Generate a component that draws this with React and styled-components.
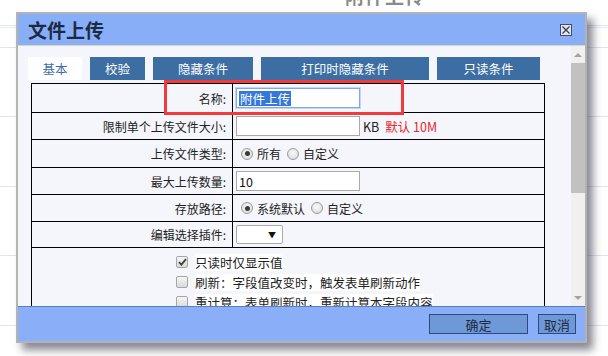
import React from 'react'
import styled, { createGlobalStyle } from 'styled-components'

const GlobalStyle = createGlobalStyle`
  body {
    margin: 0;
    font-family: "Noto Sans CJK SC", "Liberation Sans", sans-serif;
  }
`

const rows = [
  { label: '名称:', h: 28, kind: 'name' },
  { label: '限制单个上传文件大小:', h: 26, kind: 'size' },
  { label: '上传文件类型:', h: 27, kind: 'type' },
  { label: '最大上传数量:', h: 26, kind: 'count' },
  { label: '存放路径:', h: 26, kind: 'path' },
  { label: '编辑选择插件:', h: 25, kind: 'plugin' },
]

const checks = [
  { text: '只读时仅显示值', on: true },
  { text: '刷新：字段值改变时，触发表单刷新动作', on: false },
  { text: '重计算：表单刷新时，重新计算本字段内容', on: false },
]

const tabs = [
  { name: '基本', w: 54, active: true },
  { name: '校验', w: 55 },
  { name: '隐藏条件', w: 100 },
  { name: '打印时隐藏条件', w: 168 },
  { name: '只读条件', w: 103 },
]

const Page = styled.div`
  position: relative;
  width: 608px;
  height: 356px;
  overflow: hidden;
  background-color: #fff;
  background-image: linear-gradient(to bottom, transparent 25px, #dfe4ee 25px, #dfe4ee 26px, transparent 26px, transparent 27px, #e6eaf2 27px, #e6eaf2 28px, transparent 28px),
    repeating-linear-gradient(to bottom, transparent 0, transparent 47px, #dfe4ee 47px, #dfe4ee 48px, transparent 48px, transparent 69.5px);
`

const BackTitle = styled.div`
  padding-left: 345px;
  margin-top: -18px;
  font-size: 19px;
  font-weight: bold;
  color: #8a8a8a;
  letter-spacing: 1px;
`

const Dialog = styled.div`
  position: absolute;
  left: 16px;
  top: 12px;
  width: 571px;
  height: 331px;
  box-sizing: border-box;
  border: 2px solid #b3b3b3;
  background: #f5f6fb;
  display: flex;
  flex-direction: column;
  box-shadow: 6px 7px 8px rgba(40, 40, 60, 0.55);
`

const TitleBar = styled.div`
  height: 31px;
  flex: none;
  background: #88aef8;
  border-bottom: 1px solid #ddd7b4;
  display: flex;
  align-items: center;
  justify-content: space-between;
  padding: 0 13px 0 10px;
`

const Title = styled.div`
  font-size: 19px;
  font-weight: bold;
  color: #1c2a44;
  line-height: 1;
`

const CloseBox = styled.div`
  width: 12px;
  height: 12px;
  box-sizing: border-box;
  border: 1px solid #4a4a5a;
  background: #dfe4f2;
  display: flex;
  align-items: center;
  justify-content: center;
`

const Body = styled.div`
  flex: 1;
  display: flex;
  min-height: 0;
`

const Content = styled.div`
  flex: 1;
  overflow: hidden;
  padding-top: 11px;
`

const TabBar = styled.div`
  display: flex;
  gap: 8px;
  padding-left: 10px;
`

const Tab = styled.div`
  width: ${p => p.$w}px;
  height: 23px;
  display: flex;
  align-items: center;
  justify-content: center;
  font-size: 12.5px;
  background: ${p => (p.$active ? '#fff' : '#3c6ea3')};
  color: ${p => (p.$active ? '#3c6ea3' : '#fff')};
`

const Table = styled.div`
  margin: 3px 0 0 13px;
  width: 514px;
  box-sizing: border-box;
  border: 1px solid #000;
  border-bottom: none;
`

const Row = styled.div`
  display: flex;
  height: ${p => p.$h}px;
  border-bottom: 1px solid #000;
`

const Label = styled.div`
  width: 201px;
  flex: none;
  border-right: 1px solid #000;
  display: flex;
  align-items: center;
  justify-content: flex-end;
  padding-right: 6px;
  box-sizing: border-box;
  font-size: 12px;
  color: #222;
`

const Value = styled.div`
  flex: 1;
  display: flex;
  align-items: center;
  padding-left: 3px;
  font-size: 12px;
  color: #222;
`

const Field = styled.div`
  width: 124px;
  height: 20px;
  box-sizing: border-box;
  background: #fff;
  border: 1px solid ${p => (p.$focus ? '#7fa8ea' : '#a9a9a9')};
  box-shadow: ${p => (p.$focus ? '0 0 0 1px #c3d6f6' : 'none')};
  display: flex;
  align-items: center;
  padding-left: 2px;
  font-size: 12.5px;
  color: #111;
`

const Selected = styled.span`
  background: #3578d8;
  color: #fff;
  line-height: 15px;
  padding: 0 1px;
`

const Unit = styled.span`
  margin-left: 3px;
  font-size: 12.5px;
`

const Hint = styled.span`
  margin-left: 6px;
  color: #e8282c;
  font-size: 12.5px;
`

const Radio = styled.span`
  width: 12px;
  height: 12px;
  box-sizing: border-box;
  border-radius: 50%;
  border: 1px solid #9c9c9c;
  background: radial-gradient(circle at 50% 40%, #fafafa, #d6d6d6);
  display: inline-flex;
  align-items: center;
  justify-content: center;
  margin: 0 4px 0 ${p => p.$gap || 5}px;
  &::after {
    content: '';
    width: 5px;
    height: 5px;
    border-radius: 50%;
    background: ${p => (p.$on ? '#3a3a3a' : 'transparent')};
  }
`

const Select = styled.div`
  width: 47px;
  height: 19px;
  box-sizing: border-box;
  background: #fff;
  border: 1px solid #a9a9a9;
  border-radius: 2px;
  display: flex;
  align-items: center;
  justify-content: flex-end;
  padding-right: 6px;
  font-size: 8px;
  color: #111;
`

const CheckCell = styled.div`
  padding: 8px 0 0 144px;
  display: flex;
  flex-direction: column;
  gap: 8px;
  height: 80px;
`

const CheckLine = styled.div`
  display: flex;
  align-items: center;
  height: 12px;
  font-size: 12.5px;
  color: #222;
`

const Box = styled.span`
  width: 12px;
  height: 12px;
  flex: none;
  box-sizing: border-box;
  border: 1px solid #a6a6a6;
  border-radius: 2px;
  background: linear-gradient(#f6f6f6, #d9d9d9);
  display: flex;
  align-items: center;
  justify-content: center;
  margin-right: 7px;
`

const CheckText = styled.span`
  background: #fff;
  line-height: 17px;
`

const Scrollbar = styled.div`
  width: 14px;
  flex: none;
  background: #f0f0f0;
  display: flex;
  flex-direction: column;
`

const Arrow = styled.div`
  height: 17px;
  display: flex;
  align-items: center;
  justify-content: center;
  &::after {
    content: '';
    border-left: 4px solid transparent;
    border-right: 4px solid transparent;
    ${p => (p.$down ? 'border-top: 4px solid #a3a3a3;' : 'border-bottom: 4px solid #a3a3a3;')}
  }
`

const Thumb = styled.div`
  height: 130px;
  background: #c1c1c1;
`

const Track = styled.div`
  flex: 1;
`

const Footer = styled.div`
  height: 35px;
  flex: none;
  box-sizing: border-box;
  background: #8aaef8;
  border-top: 1px solid #5a7fc0;
  display: flex;
  align-items: center;
  justify-content: flex-end;
  gap: 10px;
  padding: 0 9px 0 0;
`

const Button = styled.div`
  width: ${p => p.$w}px;
  height: 20px;
  box-sizing: border-box;
  background: #6f98d8;
  border: 1px solid #2c4a7c;
  display: flex;
  align-items: center;
  justify-content: center;
  font-size: 13px;
  color: #1d2a40;
`

const Highlight = styled.div`
  position: absolute;
  left: 164px;
  top: 80px;
  width: 240px;
  height: 35px;
  box-sizing: border-box;
  border: 3px solid #f23a3c;
`

function renderValue(kind) {
  switch (kind) {
    case 'name':
      return <Field $focus><Selected>附件上传</Selected></Field>
    case 'size':
      return (
        <>
          <Field />
          <Unit>KB</Unit>
          <Hint>默认 10M</Hint>
        </>
      )
    case 'type':
      return (
        <>
          <Radio $on />所有
          <Radio $gap={6} />自定义
        </>
      )
    case 'count':
      return <Field>10</Field>
    case 'path':
      return (
        <>
          <Radio $on />系统默认
          <Radio $gap={6} />自定义
        </>
      )
    default:
      return <Select>▼</Select>
  }
}

const App = () => {
  return (
    <Page>
      <GlobalStyle />
      <BackTitle>附件上传</BackTitle>
      <Dialog>
        <TitleBar>
          <Title>文件上传</Title>
          <CloseBox>
            <svg width="8" height="8" viewBox="0 0 8 8">
              <path d="M0.5 0.5 L7.5 7.5 M7.5 0.5 L0.5 7.5" stroke="#3a3a4a" strokeWidth="1.2" />
            </svg>
          </CloseBox>
        </TitleBar>
        <Body>
          <Content>
            <TabBar>
              {tabs.map(t => (
                <Tab key={t.name} $w={t.w} $active={t.active}>{t.name}</Tab>
              ))}
            </TabBar>
            <Table>
              {rows.map(r => (
                <Row key={r.kind} $h={r.h}>
                  <Label>{r.label}</Label>
                  <Value>{renderValue(r.kind)}</Value>
                </Row>
              ))}
              <CheckCell>
                {checks.map(c => (
                  <CheckLine key={c.text}>
                    <Box>
                      {c.on && (
                        <svg width="9" height="8" viewBox="0 0 9 8">
                          <path d="M1 4.2 L3.4 6.6 L8 1.2" stroke="#404040" strokeWidth="1.8" fill="none" />
                        </svg>
                      )}
                    </Box>
                    <CheckText>{c.text}</CheckText>
                  </CheckLine>
                ))}
              </CheckCell>
            </Table>
          </Content>
          <Scrollbar>
            <Arrow />
            <Thumb />
            <Track />
            <Arrow $down />
          </Scrollbar>
        </Body>
        <Footer>
          <Button $w={99}>确定</Button>
          <Button $w={38}>取消</Button>
        </Footer>
      </Dialog>
      <Highlight />
    </Page>
  )
}

export default App
